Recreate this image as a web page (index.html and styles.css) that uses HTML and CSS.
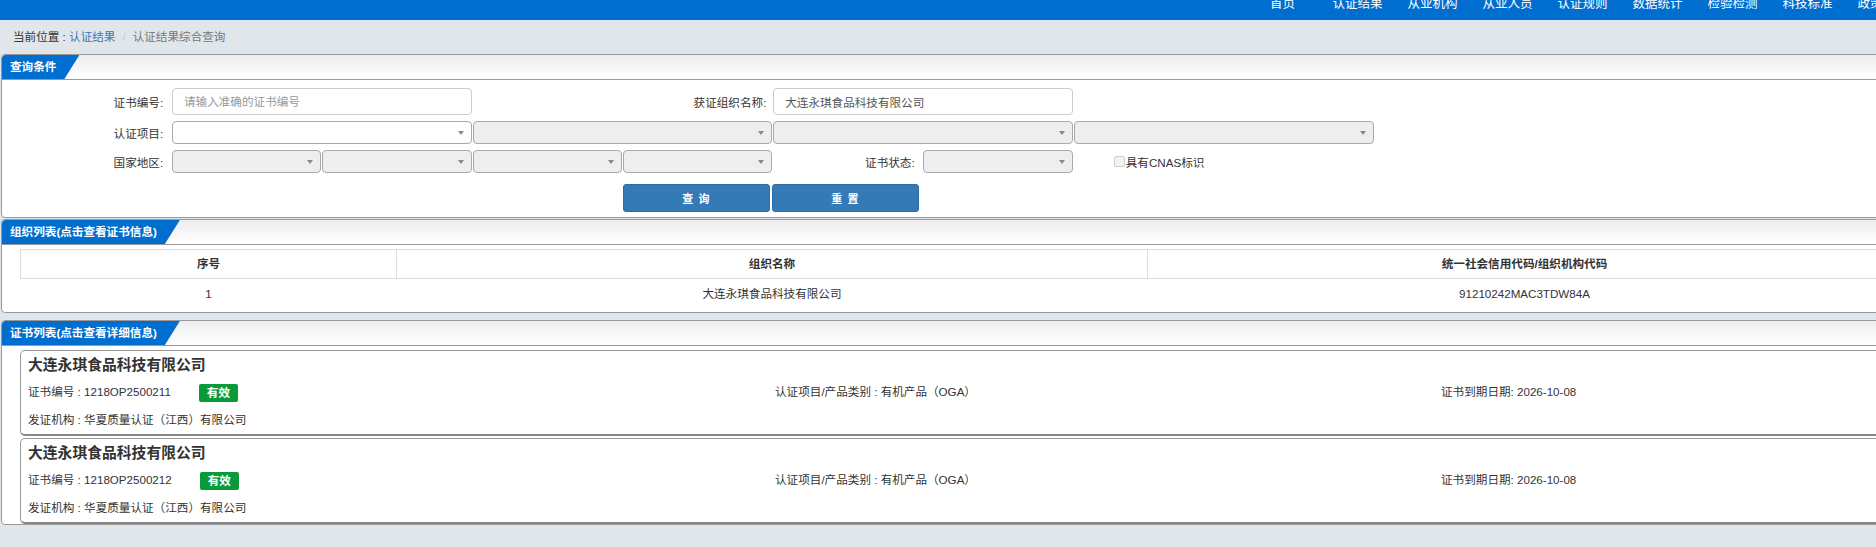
FILE: index.html
```html
<!DOCTYPE html>
<html lang="zh-CN">
<head>
<meta charset="utf-8">
<title>认证结果综合查询</title>
<link rel="stylesheet" href="styles.css">
</head>
<body>
<div class="page">
  <div class="topnav">
    <ul class="nav">
      <li>首页</li><li>认证结果</li><li>从业机构</li><li>从业人员</li><li>认证规则</li><li>数据统计</li><li>检验检测</li><li>科技标准</li><li>政策法规</li>
    </ul>
  </div>
  <div class="crumb">当前位置 : <span class="link">认证结果</span><span class="sep">/</span><span class="cur">认证结果综合查询</span></div>

  <div class="panel p-query">
    <div class="panel-head"><span class="tab">查询条件</span></div>
    <div class="form">
      <label class="lbl c1">证书编号:</label>
      <input class="field c2-3" type="text" placeholder="请输入准确的证书编号">
      <label class="lbl c4-5 narrow">获证组织名称:</label>
      <input class="field c6-7" type="text" value="大连永琪食品科技有限公司">

      <label class="lbl c1">认证项目:</label>
      <div class="sel on c2-3"><i></i></div>
      <div class="sel c4-5"><i></i></div>
      <div class="sel c6-7"><i></i></div>
      <div class="sel c8-9"><i></i></div>

      <label class="lbl c1">国家地区:</label>
      <div class="sel h"><i></i></div>
      <div class="sel h"><i></i></div>
      <div class="sel h"><i></i></div>
      <div class="sel h"><i></i></div>
      <label class="lbl">证书状态:</label>
      <div class="sel h"><i></i></div>
      <div class="chk c8-9"><span class="box"></span>具有CNAS标识</div>

      <div class="btns">
        <button class="btn b-query" type="button">查 询</button>
        <button class="btn b-reset" type="button">重 置</button>
      </div>
    </div>
  </div>

  <div class="panel p-org">
    <div class="panel-head"><span class="tab">组织列表(点击查看证书信息)</span></div>
    <table class="otable">
      <colgroup><col class="w1"><col class="w2"><col class="w3"></colgroup>
      <thead>
        <tr><th>序号</th><th>组织名称</th><th>统一社会信用代码/组织机构代码</th></tr>
      </thead>
      <tbody>
        <tr><td>1</td><td>大连永琪食品科技有限公司</td><td>91210242MAC3TDW84A</td></tr>
      </tbody>
    </table>
  </div>

  <div class="panel p-cert">
    <div class="panel-head"><span class="tab">证书列表(点击查看详细信息)</span></div>
    <div class="card">
      <div class="ctitle">大连永琪食品科技有限公司</div>
      <div class="crow">
        <div>证书编号 : 1218OP2500211<span class="badge">有效</span></div>
        <div>认证项目/产品类别 : 有机产品（OGA）</div>
        <div>证书到期日期: 2026-10-08</div>
      </div>
      <div class="crow">
        <div>发证机构 : 华夏质量认证（江西）有限公司</div>
      </div>
    </div>
    <div class="card">
      <div class="ctitle">大连永琪食品科技有限公司</div>
      <div class="crow">
        <div>证书编号 : 1218OP2500212<span class="badge">有效</span></div>
        <div>认证项目/产品类别 : 有机产品（OGA）</div>
        <div>证书到期日期: 2026-10-08</div>
      </div>
      <div class="crow">
        <div>发证机构 : 华夏质量认证（江西）有限公司</div>
      </div>
    </div>
  </div>
</div>
</body>
</html>
```

FILE: styles.css
```css
html, body {
  margin: 0;
  padding: 0;
}
html {
  overflow: hidden;
  background: #e1e6ea;
}
body {
  font-family: "Liberation Sans", "Noto Sans CJK SC", sans-serif;
  font-size: 11.6px;
  color: #333;
}
.page {
  width: 1922px;
}

/* top navigation */
.topnav {
  height: 20px;
  background: #006ecf;
  overflow: hidden;
  display: flex;
  justify-content: flex-end;
  padding-right: 2px;
}
.nav {
  list-style: none;
  margin: -2px 0 0;
  padding: 0;
  display: flex;
}
.nav li {
  width: 75px;
  text-align: center;
  color: #fff;
  font-size: 12.5px;
  line-height: 13px;
}

/* breadcrumb */
.crumb {
  height: 34px;
  line-height: 34px;
  padding-left: 13px;
  color: #333;
}
.crumb .link { color: #3a78b5; }
.crumb .sep { color: #c8c8c8; padding: 0 7px; }
.crumb .cur { color: #777; }

/* panels */
.panel {
  margin-left: 1px;
  width: 1918px;
  border: 1px solid #999;
  border-radius: 4px;
  background: #fff;
}
.p-query { margin-bottom: 1px; }
.p-org { margin-bottom: 7px; }
.panel-head {
  height: 24px;
  border-bottom: 1px solid #999;
  background: linear-gradient(#ededed, #fff);
  border-radius: 4px 4px 0 0;
}
.tab {
  display: inline-block;
  height: 24px;
  line-height: 24px;
  padding: 0 23px 0 8px;
  background: #006ecf;
  color: #fff;
  font-weight: bold;
  border-top-left-radius: 4px;
  clip-path: polygon(0 0, 100% 0, calc(100% - 15px) 100%, 0 100%);
}

/* query form */
.form {
  display: grid;
  grid-template-columns: 169.2px repeat(8, 149.5px);
  column-gap: 0.8px;
  row-gap: 6px;
  padding: 8px 0 5px;
  align-items: center;
}
.lbl {
  text-align: right;
  padding-right: 8px;
  color: #333;
}
.lbl.narrow { padding-right: 6px; }
.c1 { grid-column: 1; }
.c2-3 { grid-column: 2 / 4; }
.c4-5 { grid-column: 4 / 6; }
.c6-7 { grid-column: 6 / 8; }
.c8-9 { grid-column: 8 / 10; }

.field {
  height: 27px;
  box-sizing: border-box;
  border: 1px solid #ccc;
  border-radius: 4px;
  padding: 0 11px;
  font: inherit;
  color: #555;
  background: #fff;
  margin: 0;
}
.field::placeholder { color: #999; }

.sel {
  height: 23px;
  box-sizing: border-box;
  border: 1px solid #aaa;
  border-radius: 4px;
  background: #eee;
  display: flex;
  align-items: center;
  justify-content: flex-end;
  padding-right: 7px;
}
.sel.on { background: #fff; }
.sel i {
  width: 0;
  height: 0;
  border-left: 3px solid transparent;
  border-right: 3px solid transparent;
  border-top: 4px solid #888;
}

.chk {
  display: flex;
  align-items: center;
  padding-left: 40px;
  color: #333;
}
.chk .box {
  width: 9px;
  height: 9px;
  border: 1px solid #ccc;
  border-radius: 2px;
  background: #f3f3f3;
  margin-right: 1px;
}

.btns {
  grid-column: 5 / 7;
  display: grid;
  grid-template-columns: 147px 147px;
  column-gap: 2px;
  margin-top: 5px;
}
.btn {
  height: 28px;
  margin: 0;
  border: 1px solid #2e6da4;
  border-radius: 3px;
  background: #337ab7;
  color: #fff;
  font-family: inherit;
  font-size: 11px;
  font-weight: bold;
  letter-spacing: 1px;
}

/* organisation table */
.otable {
  border-collapse: collapse;
  table-layout: fixed;
  width: 1881px;
  margin: 4px 0 4px 18px;
}
.otable .w1 { width: 376px; }
.otable .w2 { width: 751px; }
.otable .w3 { width: 754px; }
.otable th {
  border: 1px solid #ddd;
  font-weight: bold;
  line-height: 28px;
  padding: 0;
  color: #333;
}
.otable td {
  text-align: center;
  line-height: 29px;
  padding: 0;
  color: #333;
}

/* certificate cards */
.card {
  margin: 4px 0 0 18px;
  width: 1881px;
  box-sizing: border-box;
  border: 1px solid #999;
  border-bottom: 2px solid #888;
  border-radius: 5px;
  padding: 2px 7px 0;
}
.card + .card { margin-top: 2px; }
.ctitle {
  font-size: 14.8px;
  font-weight: bold;
  line-height: 24px;
  color: #333;
}
.crow {
  display: grid;
  grid-template-columns: 747px 666px 1fr;
  line-height: 28px;
  color: #333;
}
.ctitle + .crow { margin-top: 1px; }
.badge {
  display: inline-block;
  vertical-align: middle;
  margin-left: 28px;
  height: 18px;
  line-height: 18px;
  padding: 0 8px;
  border-radius: 2px;
  background: #0b9a3a;
  color: #fff;
  font-weight: bold;
}
```
